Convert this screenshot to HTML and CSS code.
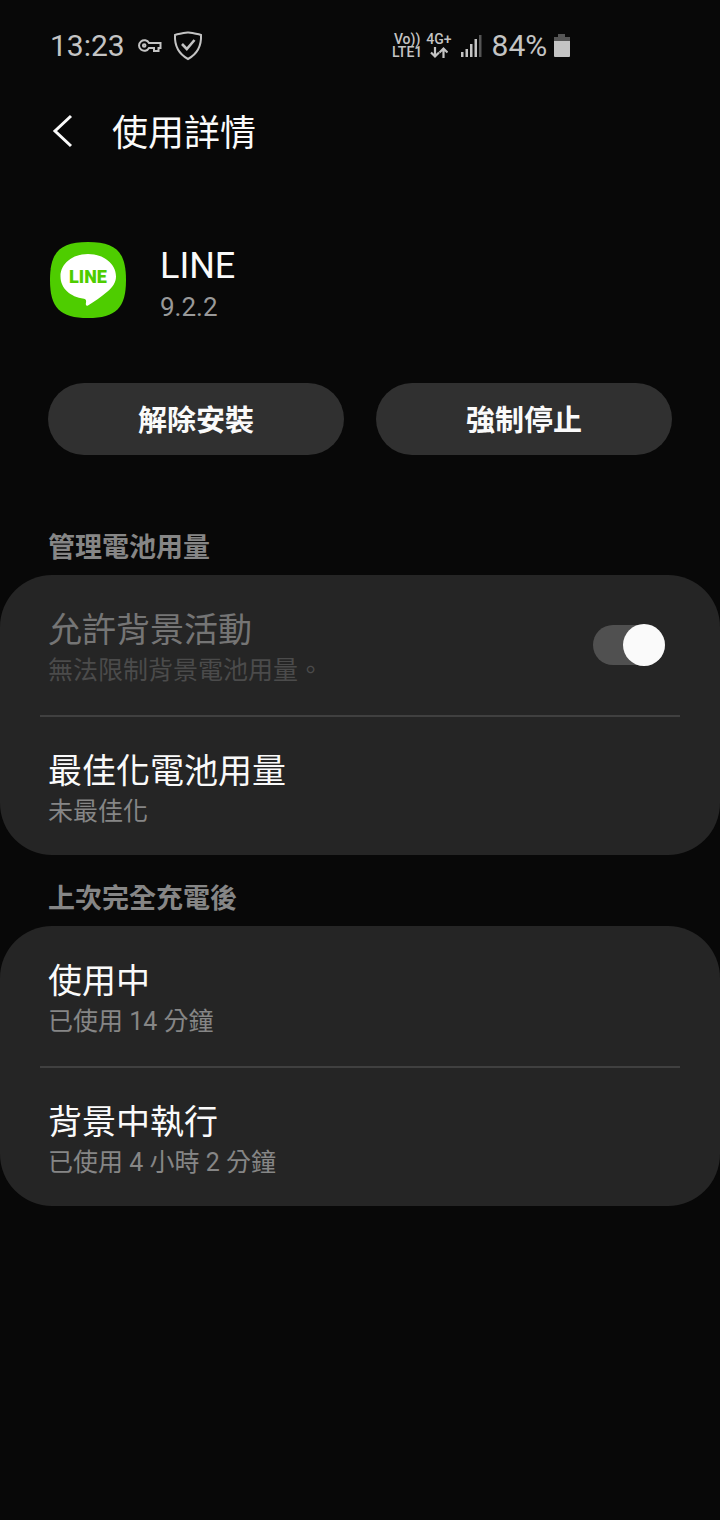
FILE: index.html
```html
<!DOCTYPE html>
<html lang="zh-Hant">
<head>
    <meta charset="UTF-8">
    <meta name="viewport" content="width=device-width, initial-scale=1.0">
    <title>使用詳情</title>
    <link rel="stylesheet" href="styles.css">
</head>
<body>

<!-- Status bar -->
<div class="status-bar">
    <div class="status-group">
        <span class="clock">13:23</span>
        <svg class="icon-key" width="26" height="16" viewBox="0 0 26 16" fill="none" stroke="#c4c4c4" stroke-width="2">
            <path d="M12 5H23.500V10H21.500V13H17V10H12A5.300 5.300 0 1 1 12 5Z"/>
            <circle cx="7.200" cy="7.500" r="1.300"/>
        </svg>
        <svg class="icon-shield" width="30" height="30" viewBox="0 0 30 30" fill="none" stroke="#c4c4c4" stroke-width="2">
            <path d="M15 1.500C19 2 24 2.600 28 4C28.500 14 25 22.500 15 28C5 22.500 1.500 14 2 4C6 2.600 11 2 15 1.500Z"/>
            <path d="M9 13L13.800 18L21.500 9" stroke-width="2.600"/>
        </svg>
    </div>
    <div class="status-group">
        <div class="network">
            <span>Vo))</span>
            <span>LTE1</span>
        </div>
        <div class="network">
            <span>4G+</span>
            <svg width="18" height="13" viewBox="0 0 18 13" fill="none" stroke="#c4c4c4" stroke-width="2.200">
                <path d="M5 1V10M1 6.500L5 10.500L9 6.500M13.500 12V3M9.500 6.500L13.500 2.500L17.500 6.500"/>
            </svg>
        </div>
        <svg class="icon-signal" width="22" height="24" viewBox="0 0 22 24" fill="#c4c4c4">
            <path d="M1 18h2.500v5H1zM5.500 15h2.500v8h-2.500zM10 10h2.500V23h-2.500zM14.500 5h2.500v18h-2.500z"/>
            <path d="M19 1h2.500v22H19z" fill="#555"/>
        </svg>
        <span class="battery-level">84%</span>
        <svg class="icon-battery" width="18" height="26" viewBox="0 0 18 26">
            <path d="M5 1h7v3h5v5H1V4h4z" fill="#555"/>
            <path d="M1 8h16v15q0 1-1 1H2q-1 0-1-1z" fill="#c4c4c4"/>
        </svg>
    </div>
</div>

<!-- Title bar -->
<header class="header">
    <button type="button" class="back" aria-label="返回">
        <svg width="24" height="36" viewBox="0 0 24 36" fill="none" stroke="#fafafa" stroke-width="3">
            <path d="M21 2L5 17L21 32"/>
        </svg>
    </button>
    <h1>使用詳情</h1>
</header>

<main>
    <div class="app">
        <svg class="app-icon" width="76" height="76" viewBox="0 0 76 76">
            <path d="M38 0C66 0 76 10 76 38S66 76 38 76S0 66 0 38S10 0 38 0Z" fill="#4ecd00"/>
            <path d="M38 12C53.500 12 66 21.500 66 34.500C66 40.500 62.500 45.500 57.500 49.500C51 55 44 60 38 63.500C36 64.500 35.500 62.500 36 60.500C36.400 58.500 36 57 34 56.700C20 55 10.500 46 10.500 34.500C10.500 21.500 22.500 12 38 12Z" fill="#fff"/>
            <text x="38" y="41" text-anchor="middle" class="app-icon-text">LINE</text>
        </svg>
        <div class="app-info">
            <div class="app-name">LINE</div>
            <div class="app-version">9.2.2</div>
        </div>
    </div>

    <div class="actions">
        <button type="button" class="action">解除安裝</button>
        <button type="button" class="action">強制停止</button>
    </div>

    <!-- Battery management -->
    <h2>管理電池用量</h2>
    <section class="card">
        <div class="row disabled">
            <label for="background">
                <span class="row-title">允許背景活動</span>
                <span class="row-note">無法限制背景電池用量。</span>
            </label>
            <input type="checkbox" id="background" class="switch" checked disabled>
        </div>
        <div class="row">
            <div>
                <span class="row-title">最佳化電池用量</span>
                <span class="row-note">未最佳化</span>
            </div>
        </div>
    </section>

    <!-- Usage since last full charge -->
    <h2>上次完全充電後</h2>
    <section class="card">
        <div class="row">
            <div>
                <span class="row-title">使用中</span>
                <span class="row-note">已使用 14 分鐘</span>
            </div>
        </div>
        <div class="row">
            <div>
                <span class="row-title">背景中執行</span>
                <span class="row-note">已使用 4 小時 2 分鐘</span>
            </div>
        </div>
    </section>
</main>

</body>
</html>
```
FILE: styles.css
```css
* {
    box-sizing: border-box;
}

body {
    margin: 0;
    background-color: #080808;
    color: #fafafa;
    font-family: Roboto, 'Noto Sans CJK TC', sans-serif;
}

svg {
    display: block;
}

.status-bar {
    display: grid;
    grid-template-columns: 1fr 1fr;
    column-gap: 24px;
    height: 92px;
    padding: 0 48px 0 50px;
    color: #c4c4c4;
}

.status-group {
    display: flex;
    align-items: center;
}

.status-group:last-child {
    padding-left: 19px;
}

.clock,
.battery-level {
    font-size: 30px;
    line-height: 36px;
}

.icon-key {
    margin-left: 12px;
}

.icon-shield {
    margin-left: 10px;
}

.network {
    display: flex;
    flex-direction: column;
    align-items: center;
    margin-right: 4px;
    font-size: 14px;
    font-weight: 500;
    line-height: 13px;
}

.icon-signal {
    margin: 0 10px 0 4px;
}

.icon-battery {
    margin-left: 6px;
}

.header {
    display: flex;
    align-items: center;
    height: 80px;
    padding: 0 48px;
}

.back {
    width: 64px;
    padding: 0 2px;
    border: none;
    background: none;
}

h1 {
    margin: 0;
    padding-top: 4px;
    font-size: 36px;
    font-weight: 400;
    line-height: 48px;
}

.app {
    display: flex;
    align-items: center;
    gap: 34px;
    margin-top: 62px;
    padding: 0 50px;
}

.app-info {
    padding-top: 10px;
}

.app-icon-text {
    fill: #4ecd00;
    font-family: Roboto, sans-serif;
    font-size: 18px;
    font-weight: 900;
}

.app-name {
    font-size: 36px;
    line-height: 44px;
}

.app-version {
    color: #999;
    font-size: 26px;
    line-height: 38px;
}

.actions {
    display: grid;
    grid-template-columns: 1fr 1fr;
    gap: 32px;
    margin-top: 57px;
    padding: 0 48px;
}

.action {
    height: 72px;
    padding-bottom: 3px;
    border: none;
    border-radius: 36px;
    background-color: #303030;
    color: #fafafa;
    font-family: inherit;
    font-size: 29px;
    font-weight: 700;
}

h2 {
    margin: 0;
    padding: 24px 48px 7px;
    color: #868686;
    font-size: 27px;
    font-weight: 700;
    line-height: 40px;
}

.actions + h2 {
    padding-top: 73px;
}

.card {
    border-radius: 52px;
    background-color: #252525;
    padding: 0 40px;
}

.row {
    display: flex;
    justify-content: space-between;
    align-items: center;
    min-height: 140px;
    padding: 8px 15px 0 8px;
}

.row + .row {
    border-top: 2px solid #404040;
}

.row-title,
.row-note {
    display: block;
}

.row-title {
    font-size: 34px;
    line-height: 44px;
}

.row-note {
    color: #868686;
    font-size: 25px;
    line-height: 38px;
}

.disabled .row-title {
    color: #757575;
}

.disabled .row-note {
    color: #4b4b4b;
}

/* Toggle: the knob is a little taller than its track */
.switch {
    appearance: none;
    display: flex;
    align-items: center;
    justify-content: flex-end;
    width: 72px;
    height: 40px;
    margin: 0 0 8px;
    border-radius: 20px;
    background-color: #505050;
}

.switch::before {
    content: "";
    flex: none;
    width: 42px;
    height: 42px;
    border-radius: 50%;
    background-color: #fafafa;
}
```
